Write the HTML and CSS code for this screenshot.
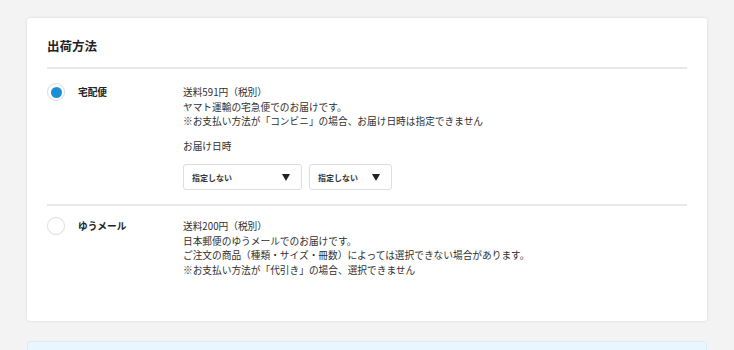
FILE: index.html
```html
<!DOCTYPE html>
<html lang="ja">
<head>
<meta charset="utf-8">
<link rel="stylesheet" href="styles.css">
</head>
<body>
<main class="page">
  <section class="card">
    <h2 class="card-title">出荷方法</h2>
    <div class="option option-first">
      <span class="radio radio-checked"></span>
      <div class="opt-name">宅配便</div>
      <div class="opt-body">
        <p class="desc">送料591円（税別）<br>ヤマト運輸の宅急便でのお届けです。<br>※お支払い方法が「コンビニ」の場合、お届け日時は指定できません</p>
        <p class="desc sub-label">お届け日時</p>
        <div class="selects">
          <div class="select select-wide"><span>指定しない</span><span class="arrow"></span></div>
          <div class="select select-narrow"><span>指定しない</span><span class="arrow"></span></div>
        </div>
      </div>
    </div>
    <div class="option option-last">
      <span class="radio"></span>
      <div class="opt-name">ゆうメール</div>
      <div class="opt-body">
        <p class="desc">送料200円（税別）<br>日本郵便のゆうメールでのお届けです。<br>ご注文の商品（種類・サイズ・冊数）によっては選択できない場合があります。<br>※お支払い方法が「代引き」の場合、選択できません</p>
      </div>
    </div>
  </section>
  <section class="card card-info"></section>
</main>
</body>
</html>
```

FILE: styles.css
```css
html, body {
  margin: 0;
  padding: 0;
  background: #f3f3f3;
}
body {
  font-family: "Noto Sans CJK JP", "Noto Sans", sans-serif;
  color: #333;
}
.page {
  padding: 18px 27px 0;
  display: flex;
  flex-direction: column;
  gap: 20px;
}
.card {
  background: #fff;
  border-radius: 3px;
  box-shadow: 0 0 3px rgba(0, 0, 0, 0.12);
  padding: 0 20px 44px;
}
.card-title {
  margin: 0;
  font-size: 12.5px;
  font-weight: 700;
  line-height: 16px;
  padding: 20px 0 13px;
  border-bottom: 2px solid #e8e8e8;
  color: #222;
}
.option {
  display: flex;
  align-items: flex-start;
}
.option-first {
  padding: 14px 0 14px;
  border-bottom: 2px solid #e8e8e8;
}
.option-last {
  padding: 11px 0 0;
}
.radio {
  box-sizing: border-box;
  width: 18px;
  height: 18px;
  border-radius: 50%;
  border: 1.5px solid #dcdce3;
  background: #fff;
  flex: none;
  display: flex;
  align-items: center;
  justify-content: center;
}
.radio-checked::after {
  content: "";
  width: 11px;
  height: 11px;
  border-radius: 50%;
  background: #1b8fd6;
}
.opt-name {
  width: 105px;
  margin-left: 13px;
  font-size: 9.7px;
  font-weight: 700;
  line-height: 18px;
  color: #222;
}
.opt-body {
  flex: 1;
}
.desc {
  margin: 0;
  font-size: 9.7px;
  line-height: 14.5px;
  color: #2f2f2f;
  padding-top: 2px;
}
.sub-label {
  margin-top: 8px;
}
.selects {
  display: flex;
  gap: 7px;
  margin-top: 11px;
}
.select {
  box-sizing: border-box;
  height: 26px;
  border: 1px solid #dedede;
  border-radius: 3px;
  background: #fff;
  display: flex;
  align-items: center;
  justify-content: space-between;
  padding: 0 11px 0 8px;
  font-size: 8px;
  font-weight: 700;
  color: #333;
}
.select-wide { width: 119px; }
.select-narrow { width: 83px; }
.arrow {
  width: 0;
  height: 0;
  border-left: 4.5px solid transparent;
  border-right: 4.5px solid transparent;
  border-top: 7px solid #222;
}
.card-info {
  background: #eaf6fd;
  border: 1px solid #d9edf8;
  box-shadow: none;
  height: 40px;
  padding: 0;
}
```
